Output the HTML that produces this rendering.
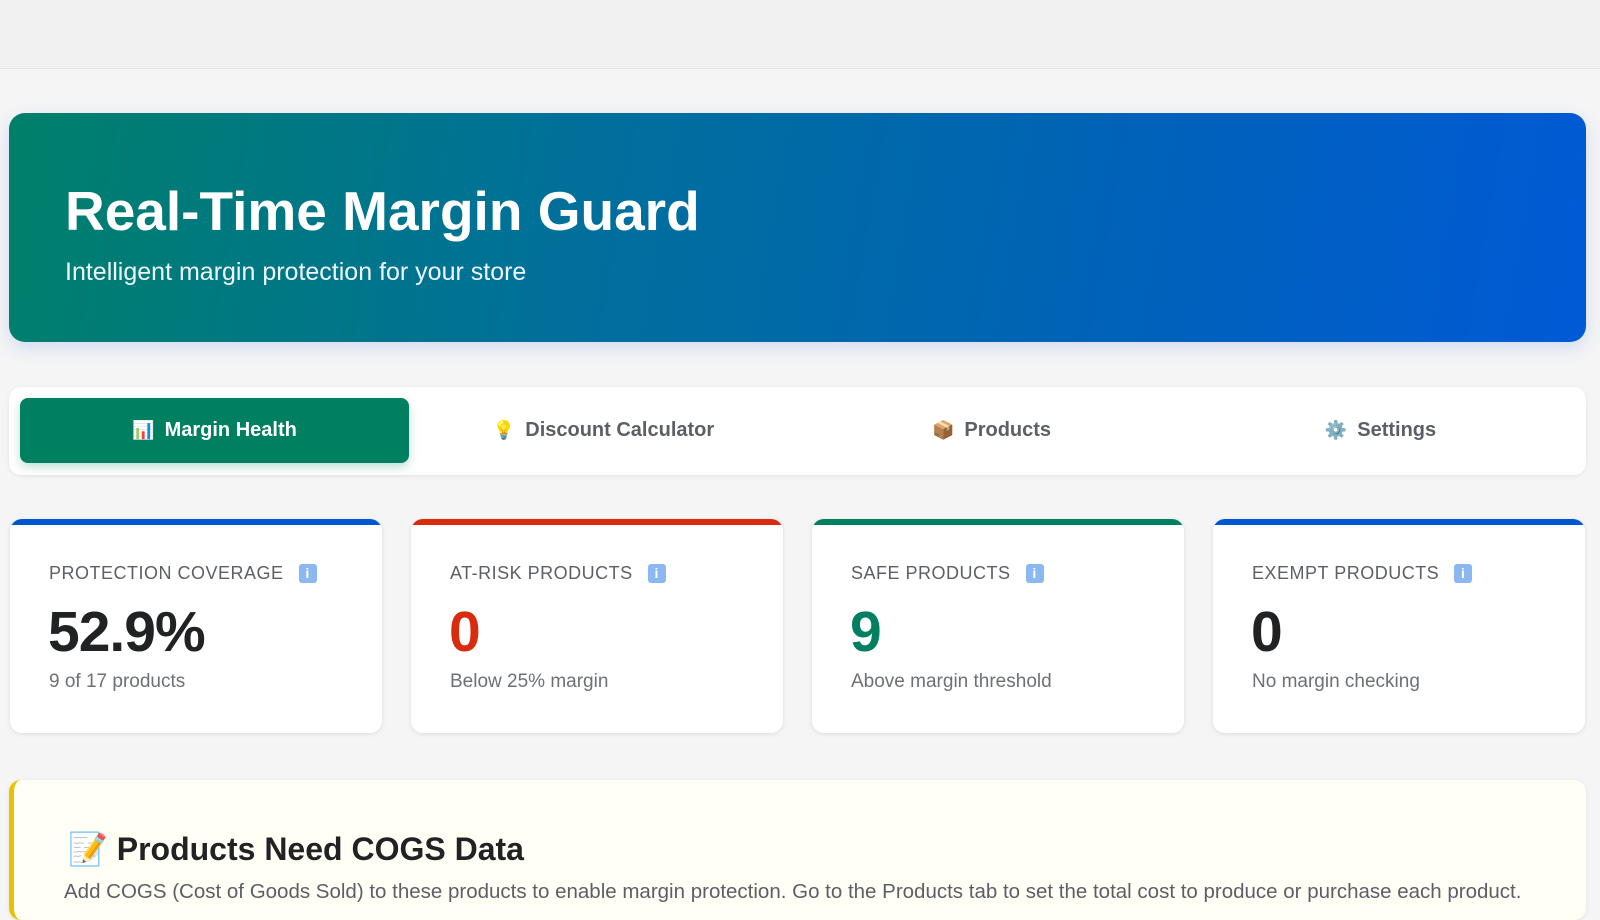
<!DOCTYPE html>
<html><head><meta charset="utf-8"><style>
*{box-sizing:border-box;margin:0;padding:0}
body{width:1600px;height:900px;overflow:hidden;background:#f5f5f6;font-family:"Liberation Sans",sans-serif;position:relative}
.top{position:absolute;left:0;top:0;width:1600px;height:69px;background:#f1f1f1;border-bottom:1px solid #e4e4e4}
.banner{position:absolute;left:9px;top:113px;width:1577px;height:229px;border-radius:16px;background:linear-gradient(100deg,#00806a 0%,#00709a 35%,#0062b8 70%,#005ad6 100%);box-shadow:0 6px 18px rgba(0,80,200,.15)}
.banner h1{position:absolute;left:56px;top:66px;font-size:55px;font-weight:700;color:#fff;letter-spacing:0}
.banner p{position:absolute;left:56px;top:145px;font-size:25px;color:#eef6ff}
.tabs{position:absolute;left:9px;top:387px;width:1577px;height:88px;background:#fff;border-radius:12px;box-shadow:0 1px 4px rgba(0,0,0,.08)}
.tab{position:absolute;top:11px;height:65px;width:389px;display:flex;align-items:center;justify-content:center;font-size:20px;font-weight:700;color:#5c5f66}
.tab.act{background:#008060;color:#fff;border-radius:8px;box-shadow:0 4px 10px rgba(0,128,96,.25)}
.tab span.i{margin-right:10px;font-size:18px}
.card{position:absolute;top:519px;width:372px;height:214px;background:#fff;border-radius:12px;box-shadow:0 1px 5px rgba(0,0,0,.1);overflow:hidden}
.card:before{content:"";position:absolute;left:0;top:0;right:0;height:6px;background:var(--c)}
.lab{position:absolute;left:39px;top:44px;font-size:18px;letter-spacing:.5px;color:#5c5f66;display:flex;align-items:center}
.info{display:inline-block;width:18px;height:19px;background:#8bb8f0;border-radius:3px;color:#fff;font-size:14px;text-align:center;line-height:19px;margin-left:15px;font-weight:700}
.num{position:absolute;left:38px;top:80px;font-size:57px;font-weight:700;color:#202223;letter-spacing:-1px}
.sub{position:absolute;left:39px;top:152px;font-size:19px;color:#6d7175}
.cogs{position:absolute;left:9px;top:780px;width:1577px;height:140px;background:#fffff6;border-radius:12px;border-left:5px solid #e8c200;box-shadow:0 1px 5px rgba(0,0,0,.08)}
.cogs h2{position:absolute;left:54px;top:50px;font-size:32px;font-weight:700;color:#202223}
.cogs p{position:absolute;left:50px;top:100px;font-size:20.5px;color:#5c5f66;white-space:nowrap}
</style></head><body>
<div class="top"></div>
<div class="banner"><h1>Real-Time Margin Guard</h1><p>Intelligent margin protection for your store</p></div>
<div class="tabs">
<div class="tab act" style="left:11px"><span class="i">📊</span>Margin Health</div>
<div class="tab" style="left:400px"><span class="i">💡</span>Discount Calculator</div>
<div class="tab" style="left:788px"><span class="i">📦</span>Products</div>
<div class="tab" style="left:1177px"><span class="i">⚙️</span>Settings</div>
</div>
<div class="card" style="left:10px;--c:#0057d0"><div class="lab">PROTECTION COVERAGE<span class="info">i</span></div><div class="num">52.9%</div><div class="sub">9 of 17 products</div></div>
<div class="card" style="left:411px;--c:#d72c0d"><div class="lab">AT-RISK PRODUCTS<span class="info">i</span></div><div class="num" style="color:#d72c0d">0</div><div class="sub">Below 25% margin</div></div>
<div class="card" style="left:812px;--c:#008060"><div class="lab">SAFE PRODUCTS<span class="info">i</span></div><div class="num" style="color:#008060">9</div><div class="sub">Above margin threshold</div></div>
<div class="card" style="left:1213px;--c:#0057d0"><div class="lab">EXEMPT PRODUCTS<span class="info">i</span></div><div class="num">0</div><div class="sub">No margin checking</div></div>
<div class="cogs"><h2>📝 Products Need COGS Data</h2><p>Add COGS (Cost of Goods Sold) to these products to enable margin protection. Go to the Products tab to set the total cost to produce or purchase each product.</p></div>
</body></html>
